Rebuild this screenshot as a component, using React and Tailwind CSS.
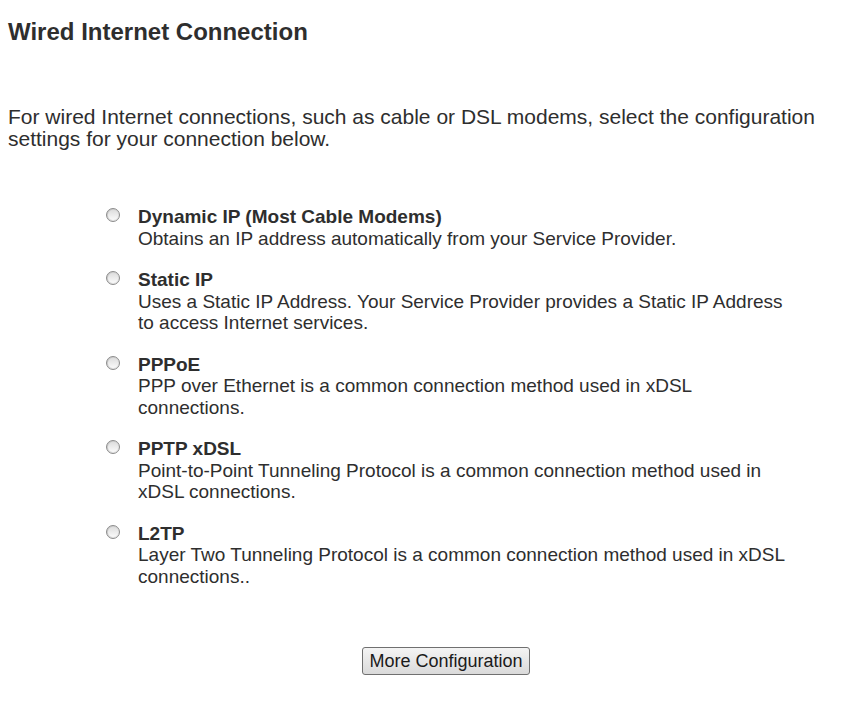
const OPTIONS = [
  { title: 'Dynamic IP (Most Cable Modems)', desc: 'Obtains an IP address automatically from your Service Provider.' },
  { title: 'Static IP', desc: 'Uses a Static IP Address. Your Service Provider provides a Static IP Address to access Internet services.' },
  { title: 'PPPoE', desc: 'PPP over Ethernet is a common connection method used in xDSL connections.' },
  { title: 'PPTP xDSL', desc: 'Point-to-Point Tunneling Protocol is a common connection method used in xDSL connections.' },
  { title: 'L2TP', desc: 'Layer Two Tunneling Protocol is a common connection method used in xDSL connections..' },
];

function Radio() {
  return (
    <span className="mt-[2px] w-[14px] h-[14px] shrink-0 rounded-full border border-[#8c8c8c] bg-gradient-to-br from-[#c4c4c4] to-[#f2f2f2] flex items-center justify-center">
      <span className="w-[10px] h-[10px] rounded-full bg-gradient-to-b from-[#dedede] to-[#fafafa]" />
    </span>
  );
}

export default function App() {
  return (
    <div className="bg-white min-h-[724px] px-2 pt-[18px] text-[#2e2e2e] font-['Liberation_Sans',Arial,sans-serif]">
      <h2 className="text-[24px] font-bold leading-[28px]">Wired Internet Connection</h2>
      <p className="mt-[60px] text-[21px] leading-[22px] w-[830px]">
        For wired Internet connections, such as cable or DSL modems, select the configuration settings for your connection below.
      </p>
      <div className="mt-[56px] ml-[98px] w-[697px] flex flex-col gap-[20px]">
        {OPTIONS.map((o) => (
          <label key={o.title} className="flex gap-[18px]">
            <Radio />
            <div className="text-[19px] leading-[21.5px]">
              <div className="font-bold">{o.title}</div>
              <div>{o.desc}</div>
            </div>
          </label>
        ))}
      </div>
      <div className="mt-[60px] flex justify-center">
        <button className="ml-[28px] h-[28px] px-[6px] border border-[#707070] rounded-[3px] bg-gradient-to-b from-[#f4f4f4] to-[#dadada] text-[18px] leading-none text-[#1a1a1a]">
          More Configuration
        </button>
      </div>
    </div>
  );
}
